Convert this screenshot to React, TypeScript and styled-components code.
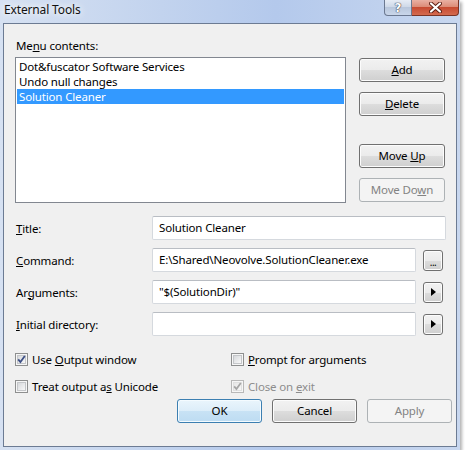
import React from "react";
import styled, { createGlobalStyle, css } from "styled-components";

const GlobalStyle = createGlobalStyle`
  html, body { margin: 0; padding: 0; background: #fff; }
  body {
    font-family: "Noto Sans", "Open Sans", "DejaVu Sans", sans-serif;
    font-size: 11.5px;
    letter-spacing: -0.15px;
    color: #000;
  }
  * { box-sizing: border-box; }
`;

const Window = styled.div`
  width: 460px;
  height: 450px;
  padding: 0 3px 3px;
  display: flex;
  flex-direction: column;
  background: linear-gradient(90deg, #d6e1f2 0%, #c2d3ee 35%, #b4c9ec 60%, #c8d7ef 100%);
  box-shadow: 2px 2px 3px rgba(0, 0, 0, 0.3);
`;

const TitleBar = styled.div`
  height: 23px;
  flex-shrink: 0;
  display: flex;
  align-items: flex-start;
`;

const TitleText = styled.div`
  padding: 2px 0 0 1px;
  line-height: 15px;
  font-size: 12px;
  color: #111;
  text-shadow: 0 0 6px #fff, 0 0 10px #fff;
`;

const CaptionButtons = styled.div`
  margin-left: auto;
  margin-right: -2px;
  display: flex;
`;

const CaptionButton = styled.div<{ $close?: boolean }>`
  height: 16px;
  display: flex;
  align-items: center;
  justify-content: center;
  border: 1px solid #6b7890;
  border-top: none;
  ${(p) =>
    p.$close
      ? css`
          width: 47px;
          border-color: #7a3426;
          border-left: none;
          border-radius: 0 0 4px 0;
          background: linear-gradient(#e9b0a3 0%, #dc8c78 45%, #c74b32 50%, #d46a4f 100%);
        `
      : css`
          width: 28px;
          border-radius: 0 0 0 4px;
          background: linear-gradient(#e6ecf5 0%, #cfd9e8 45%, #b9c7dc 50%, #c9d6ea 100%);
        `}
`;

const HelpGlyph = styled.span`
  font-family: "DejaVu Sans", sans-serif;
  font-weight: bold;
  font-size: 12px;
  line-height: 12px;
  color: #fff;
  text-shadow: 0 0 1px #445, 0 0 1px #445, 0 0 1px #445;
`;

const Client = styled.div`
  flex: 1;
  border: 1px solid #6c7b93;
  background: #f0f0f0;
  padding: 14px 4px 0 11px;
  display: flex;
  flex-direction: column;
`;

const TopSection = styled.div`
  display: flex;
  gap: 13px;
`;

const ListColumn = styled.div`
  width: 331px;
`;

const Label = styled.div`
  line-height: 15px;
  white-space: nowrap;
`;

const ListLabel = styled(Label)`
  padding-left: 1px;
  margin-bottom: 4px;
`;

const ListBox = styled.div`
  height: 146px;
  border: 1px solid #828790;
  background: #fff;
  padding: 1px;
`;

const ListItem = styled.div<{ $selected?: boolean }>`
  height: 15px;
  line-height: 15px;
  padding-left: 2px;
  white-space: nowrap;
  ${(p) =>
    p.$selected &&
    css`
      background: #3399ff;
      color: #fff;
    `}
`;

const ButtonColumn = styled.div`
  padding-top: 20px;
  display: flex;
  flex-direction: column;
`;

const Button = styled.div<{ $variant?: "normal" | "default" | "disabled"; $gap?: number; $width?: number }>`
  width: ${(p) => p.$width ?? 86}px;
  height: 24px;
  margin-top: ${(p) => p.$gap ?? 0}px;
  line-height: 22px;
  text-align: center;
  border: 1px solid #707070;
  border-radius: 3px;
  background: linear-gradient(#f2f2f2 0%, #ebebeb 50%, #dddddd 50%, #cfcfcf 100%);
  box-shadow: inset 0 0 0 1px #fcfcfc;
  white-space: nowrap;
  ${(p) =>
    p.$variant === "default" &&
    css`
      border-color: #3c7fb1;
      background: linear-gradient(#eaf5fc 0%, #dcedf9 50%, #c8e2f5 50%, #bddcf2 100%);
      box-shadow: inset 0 0 0 1px #f4fbff;
    `}
  ${(p) =>
    p.$variant === "disabled" &&
    css`
      border-color: #adb2b5;
      background: #f4f4f4;
      box-shadow: none;
      color: #838383;
    `}
`;

const Form = styled.div`
  margin-top: 13px;
  display: grid;
  grid-template-columns: 130px 264px 23px;
  column-gap: 7px;
  row-gap: 8px;
  align-items: center;
`;

const FormLabel = styled(Label)`
  padding-left: 1px;
`;

const TextBox = styled.div<{ $wide?: boolean }>`
  height: 24px;
  line-height: 22px;
  padding-left: 6px;
  background: #fff;
  border: 1px solid #d5d9de;
  border-top-color: #b9bdc3;
  border-radius: 2px;
  white-space: nowrap;
  overflow: hidden;
  ${(p) =>
    p.$wide &&
    css`
      grid-column: 2 / 4;
    `}
`;

const SmallButton = styled.div`
  width: 20px;
  height: 21px;
  display: flex;
  align-items: center;
  justify-content: center;
  border: 1px solid #707070;
  border-radius: 3px;
  background: linear-gradient(#f2f2f2 0%, #ebebeb 50%, #dddddd 50%, #cfcfcf 100%);
  box-shadow: inset 0 0 0 1px #fcfcfc;
`;

const Dots = styled.span`
  font-size: 10px;
  line-height: 10px;
  margin-top: 4px;
  letter-spacing: -0.5px;
`;

const CheckGrid = styled.div`
  margin-top: 16px;
  display: grid;
  grid-template-columns: 216px auto;
  row-gap: 12px;
`;

const CheckRow = styled.div<{ $disabled?: boolean }>`
  height: 15px;
  display: flex;
  align-items: center;
  gap: 4px;
  line-height: 15px;
  white-space: nowrap;
  color: ${(p) => (p.$disabled ? "#8d8d8d" : "#000")};
`;

const DialogButtons = styled.div`
  margin-top: 5px;
  display: flex;
  justify-content: flex-end;
  gap: 10px;
`;

function CheckBox({ checked, disabled }: { checked?: boolean; disabled?: boolean }) {
  const edge = disabled ? "#b8b8b8" : "#8e8f8f";
  const mark = disabled ? "#a6a6a6" : "#3d4f85";
  const id = disabled ? "cbd" : "cbn";
  return (
    <svg width="13" height="13" viewBox="0 0 13 13" style={{ flexShrink: 0 }}>
      <defs>
        <linearGradient id={id} x1="0" y1="0" x2="1" y2="1">
          <stop offset="0" stopColor={disabled ? "#e6e6e6" : "#d4d6d9"} />
          <stop offset="1" stopColor={disabled ? "#f8f8f8" : "#fbfbfb"} />
        </linearGradient>
      </defs>
      <rect x="0.5" y="0.5" width="12" height="12" fill="#f6f6f6" stroke={edge} />
      <rect x="2.5" y="2.5" width="8" height="8" fill={`url(#${id})`} stroke={disabled ? "#e0e0e0" : "#c4c6c9"} />
      {checked && <path d="M3.2 6.4 L5.4 9 L9.8 3" fill="none" stroke={mark} strokeWidth="1.8" />}
    </svg>
  );
}

function ArrowIcon() {
  return (
    <svg width="5" height="8" viewBox="0 0 5 8">
      <path d="M0 0 L5 4 L0 8 Z" fill="#000" />
    </svg>
  );
}

function CloseIcon() {
  return (
    <svg width="13" height="11" viewBox="0 0 13 11">
      <path d="M2 1.5 L11 9.5 M11 1.5 L2 9.5" stroke="#5a1d12" strokeWidth="4" strokeLinecap="round" />
      <path d="M2 1.5 L11 9.5 M11 1.5 L2 9.5" stroke="#fff" strokeWidth="2.2" strokeLinecap="round" />
    </svg>
  );
}

const tools = ["Dot&fuscator Software Services", "Undo null changes", "Solution Cleaner"];

export default function App() {
  return (
    <>
      <GlobalStyle />
      <Window>
        <TitleBar>
          <TitleText>External Tools</TitleText>
          <CaptionButtons>
            <CaptionButton>
              <HelpGlyph>?</HelpGlyph>
            </CaptionButton>
            <CaptionButton $close>
              <CloseIcon />
            </CaptionButton>
          </CaptionButtons>
        </TitleBar>
        <Client>
          <TopSection>
            <ListColumn>
              <ListLabel>
                Me<u>n</u>u contents:
              </ListLabel>
              <ListBox>
                {tools.map((t, i) => (
                  <ListItem key={t} $selected={i === 2}>
                    {t}
                  </ListItem>
                ))}
              </ListBox>
            </ListColumn>
            <ButtonColumn>
              <Button>
                <u>A</u>dd
              </Button>
              <Button $gap={10}>
                <u>D</u>elete
              </Button>
              <Button $gap={28}>
                Move <u>U</u>p
              </Button>
              <Button $gap={10} $variant="disabled">
                Move Do<u>w</u>n
              </Button>
            </ButtonColumn>
          </TopSection>

          <Form>
            <FormLabel>
              <u>T</u>itle:
            </FormLabel>
            <TextBox $wide>Solution Cleaner</TextBox>

            <FormLabel>
              <u>C</u>ommand:
            </FormLabel>
            <TextBox>E:\Shared\Neovolve.SolutionCleaner.exe</TextBox>
            <SmallButton>
              <Dots>...</Dots>
            </SmallButton>

            <FormLabel>
              Ar<u>g</u>uments:
            </FormLabel>
            <TextBox>"$(SolutionDir)"</TextBox>
            <SmallButton>
              <ArrowIcon />
            </SmallButton>

            <FormLabel>
              <u>I</u>nitial directory:
            </FormLabel>
            <TextBox />
            <SmallButton>
              <ArrowIcon />
            </SmallButton>
          </Form>

          <CheckGrid>
            <CheckRow>
              <CheckBox checked />
              <span>
                Use <u>O</u>utput window
              </span>
            </CheckRow>
            <CheckRow>
              <CheckBox />
              <span>
                <u>P</u>rompt for arguments
              </span>
            </CheckRow>
            <CheckRow>
              <CheckBox />
              <span>
                Treat output a<u>s</u> Unicode
              </span>
            </CheckRow>
            <CheckRow $disabled>
              <CheckBox checked disabled />
              <span>
                Close on <u>e</u>xit
              </span>
            </CheckRow>
          </CheckGrid>

          <DialogButtons>
            <Button $width={85} $variant="default">
              OK
            </Button>
            <Button $width={85}>Cancel</Button>
            <Button $width={85} $variant="disabled">
              Apply
            </Button>
          </DialogButtons>
        </Client>
      </Window>
    </>
  );
}
